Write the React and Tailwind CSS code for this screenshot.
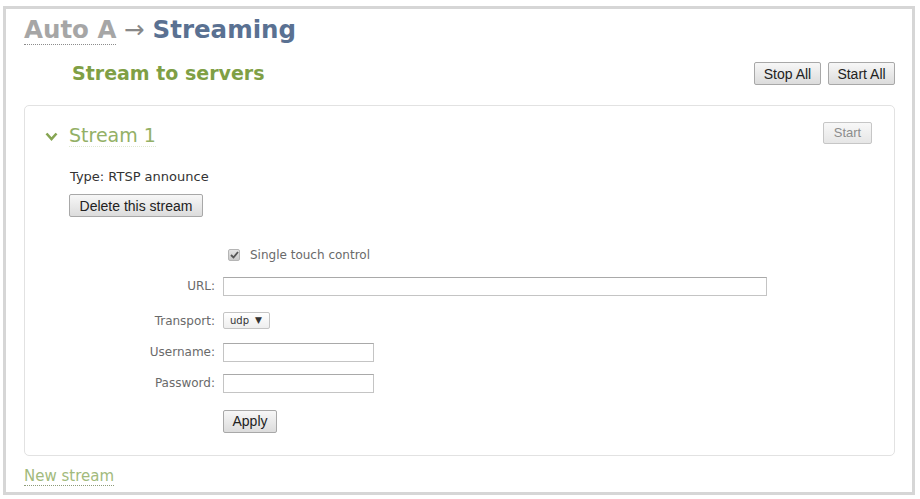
import { useState } from "react";

const btn =
  "h-[23px] rounded-[2px] border border-[#a8a8a8] bg-gradient-to-b from-[#f7f7f7] to-[#dcdcdc] font-['Liberation_Sans',Arial,sans-serif] text-[14px] leading-none text-[#222]";

function Field({ label, children }) {
  return (
    <div className="flex items-center gap-[8px]">
      <span className="w-[170px] text-right text-[12px] text-[#6a6a6a]">{label}</span>
      {children}
    </div>
  );
}

function TextInput({ width }) {
  return (
    <input
      type="text"
      className={`h-[19px] ${width} border border-[#c4c4c4] border-t-[#a9a9a9] bg-white px-1 text-[12px] outline-none`}
    />
  );
}

function Stream({ name }) {
  const [singleTouch, setSingleTouch] = useState(true);

  return (
    <div className="mt-[20px] rounded-[5px] border border-[#e2e2e2] pb-[22px] pl-[20px] pr-[22px] pt-[16px]">
      <div className="flex items-start justify-between">
        <div className="mt-[2px] flex items-center gap-[11px] text-[#93b066]">
          <svg width="13" height="9" viewBox="0 0 13 9" className="mt-[1px]">
            <polyline points="1.5,1.5 6.5,7 11.5,1.5" fill="none" stroke="#86a552" strokeWidth="2.6" />
          </svg>
          <span className="border-b border-dotted border-[#dfe8d2] text-[19px] leading-[22px]">{name}</span>
        </div>
        <button className="h-[22px] w-[49px] rounded-[2px] border border-[#c6c6c6] bg-gradient-to-b from-[#f8f8f8] to-[#e6e6e6] font-['Liberation_Sans',Arial,sans-serif] text-[13px] text-[#8c8c8c]">
          Start
        </button>
      </div>

      <div className="ml-[25px] mt-[22px] text-[13px] leading-[16px] text-[#333]">Type: RTSP announce</div>
      <button className={`${btn} ml-[24px] mt-[9px] w-[134px]`}>Delete this stream</button>

      <div className="mt-[29px] flex flex-col">
        <div className="flex h-[16px] items-center">
          <span className="w-[178px]" />
          <label className="ml-[5px] flex items-center gap-[10px] text-[12px] text-[#6a6a6a]">
            <span
              onClick={() => setSingleTouch(!singleTouch)}
              className="flex h-[12px] w-[12px] items-center justify-center rounded-[2px] border border-[#b5b5b5] bg-gradient-to-b from-[#e4e4e4] to-[#c9c9c9]"
            >
              {singleTouch && (
                <svg width="9" height="8" viewBox="0 0 9 8">
                  <polyline points="1,4 3.5,6.5 8,1" fill="none" stroke="#555" strokeWidth="1.8" />
                </svg>
              )}
            </span>
            Single touch control
          </label>
        </div>

        <div className="mt-[14px]">
          <Field label="URL:">
            <TextInput width="w-[544px]" />
          </Field>
        </div>
        <div className="mt-[16px]">
          <Field label="Transport:">
            <span className="flex h-[17px] w-[47px] items-center gap-[6px] rounded-[2px] border border-[#c4c4c4] bg-gradient-to-b from-white to-[#eeeeee] pl-[6px] text-[10px] text-[#333]">
              udp
              <span className="text-[9px]">▼</span>
            </span>
          </Field>
        </div>
        <div className="mt-[13px]">
          <Field label="Username:">
            <TextInput width="w-[151px]" />
          </Field>
        </div>
        <div className="mt-[12px]">
          <Field label="Password:">
            <TextInput width="w-[151px]" />
          </Field>
        </div>
        <div className="mt-[17px] flex">
          <span className="w-[178px]" />
          <button className={`${btn} w-[54px]`}>Apply</button>
        </div>
      </div>
    </div>
  );
}

export default function App() {
  return (
    <div className="h-[499px] w-[920px] overflow-hidden bg-white font-['DejaVu_Sans',Verdana,sans-serif]">
      <div className="ml-[3px] mt-[6px] flex h-[489px] w-[912px] flex-col border-[3px] border-[#d6d6d6] pl-[18px] pr-[17px] pt-[7px]">
        <h1 className="text-[24.5px] font-bold leading-[28px]">
          <span className="border-b border-dotted border-[#8c8c8c] text-[#a6a6a6]">Auto A</span>
          <span className="font-normal text-[#888]"> → </span>
          <span className="text-[#5a7192]">Streaming</span>
        </h1>

        <div className="mt-[18px] flex items-center justify-between">
          <h2 className="ml-[48px] text-[19px] font-bold leading-[23px] text-[#7f9f45]">Stream to servers</h2>
          <div className="flex gap-[7px]">
            <button className={`${btn} w-[67px]`}>Stop All</button>
            <button className={`${btn} w-[67px]`}>Start All</button>
          </div>
        </div>

        <Stream name="Stream 1" />

        <a className="mt-[11px] self-start border-b border-dotted border-[#8c9a78] text-[15px] leading-[18px] text-[#a2ba7c]">
          New stream
        </a>
      </div>
    </div>
  );
}
